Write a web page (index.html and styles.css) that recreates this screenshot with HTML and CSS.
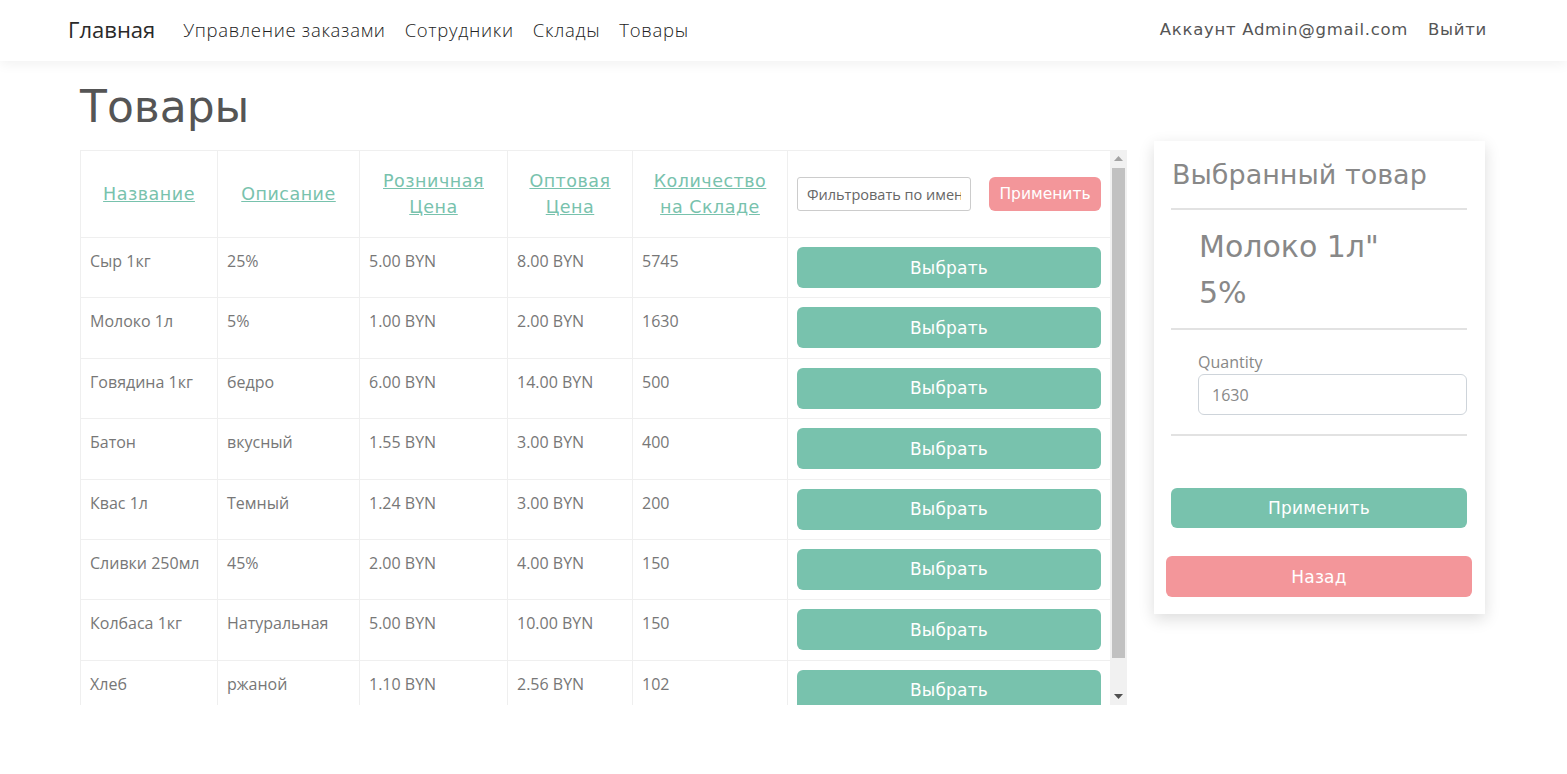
FILE: index.html
```html
<!DOCTYPE html>
<html lang="ru">
<head>
<meta charset="utf-8">
<title>Товары</title>
<link rel="stylesheet" href="styles.css">
</head>
<body>
<nav class="navbar">
  <div class="nav-left">
    <a class="brand" href="#">Главная</a>
    <a class="nav-link" href="#">Управление заказами</a>
    <a class="nav-link" href="#">Сотрудники</a>
    <a class="nav-link" href="#">Склады</a>
    <a class="nav-link" href="#">Товары</a>
  </div>
  <div class="nav-right">
    <a class="nav-link" href="#">Аккаунт Admin@gmail.com</a>
    <a class="nav-link" href="#">Выйти</a>
  </div>
</nav>
<div class="page">
  <div class="left">
    <h1 class="title">Товары</h1>
    <div class="table-frame">
      <div class="scroller">
        <table class="grid">
          <colgroup>
            <col class="c1"><col class="c2"><col class="c3"><col class="c4"><col class="c5"><col class="c6">
          </colgroup>
          <thead>
            <tr>
              <th><a href="#">Название</a></th>
              <th><a href="#">Описание</a></th>
              <th><a href="#">Розничная Цена</a></th>
              <th><a href="#">Оптовая Цена</a></th>
              <th><a href="#">Количество на Складе</a></th>
              <th>
                <div class="filter">
                  <input class="filter-input" type="text" placeholder="Фильтровать по имени">
                  <button class="btn btn-pink btn-sm">Применить</button>
                </div>
              </th>
            </tr>
          </thead>
          <tbody>
            <tr><td>Сыр 1кг</td><td>25%</td><td>5.00 BYN</td><td>8.00 BYN</td><td>5745</td><td><button class="btn btn-teal btn-block">Выбрать</button></td></tr>
            <tr><td>Молоко 1л</td><td>5%</td><td>1.00 BYN</td><td>2.00 BYN</td><td>1630</td><td><button class="btn btn-teal btn-block">Выбрать</button></td></tr>
            <tr><td>Говядина 1кг</td><td>бедро</td><td>6.00 BYN</td><td>14.00 BYN</td><td>500</td><td><button class="btn btn-teal btn-block">Выбрать</button></td></tr>
            <tr><td>Батон</td><td>вкусный</td><td>1.55 BYN</td><td>3.00 BYN</td><td>400</td><td><button class="btn btn-teal btn-block">Выбрать</button></td></tr>
            <tr><td>Квас 1л</td><td>Темный</td><td>1.24 BYN</td><td>3.00 BYN</td><td>200</td><td><button class="btn btn-teal btn-block">Выбрать</button></td></tr>
            <tr><td>Сливки 250мл</td><td>45%</td><td>2.00 BYN</td><td>4.00 BYN</td><td>150</td><td><button class="btn btn-teal btn-block">Выбрать</button></td></tr>
            <tr><td>Колбаса 1кг</td><td>Натуральная</td><td>5.00 BYN</td><td>10.00 BYN</td><td>150</td><td><button class="btn btn-teal btn-block">Выбрать</button></td></tr>
            <tr><td>Хлеб</td><td>ржаной</td><td>1.10 BYN</td><td>2.56 BYN</td><td>102</td><td><button class="btn btn-teal btn-block">Выбрать</button></td></tr>
          </tbody>
        </table>
      </div>
      <div class="vscroll">
        <div class="vs-btn"><svg width="9" height="5" viewBox="0 0 9 5"><path d="M0 5 L4.5 0 L9 5 Z" fill="#a3a3a3"/></svg></div>
        <div class="vs-track"><div class="vs-thumb"></div></div>
        <div class="vs-btn"><svg width="9" height="5" viewBox="0 0 9 5"><path d="M0 0 L9 0 L4.5 5 Z" fill="#505050"/></svg></div>
      </div>
    </div>
  </div>
  <aside class="card">
    <h3 class="card-title">Выбранный товар</h3>
    <hr class="sep">
    <div class="item">
      <div class="item-name">Молоко 1л"</div>
      <div class="item-desc">5%</div>
    </div>
    <hr class="sep">
    <div class="field">
      <label class="field-label">Quantity</label>
      <input class="field-input" type="text" value="1630">
    </div>
    <hr class="sep">
    <button class="btn btn-teal btn-apply">Применить</button>
    <button class="btn btn-pink btn-back">Назад</button>
  </aside>
</div>
</body>
</html>
```

FILE: styles.css
```css
* { box-sizing: border-box; }

body {
  margin: 0;
  font-family: "Open Sans", "Noto Sans", sans-serif;
  color: #808080;
  background: #fff;
}

a { text-decoration: none; }

.navbar {
  height: 61px;
  display: flex;
  align-items: center;
  justify-content: space-between;
  padding: 0 80px 3px 68px;
  background: #fff;
  box-shadow: 0 3px 12px rgba(0, 0, 0, 0.06);
  position: relative;
  z-index: 2;
}

.nav-left, .nav-right {
  display: flex;
  align-items: center;
}

.brand {
  font-size: 22px;
  font-weight: 400;
  color: #2a2a2a;
  margin-right: 28px;
}

.nav-left .nav-link {
  font-size: 18.5px;
  font-weight: 300;
  letter-spacing: 0.7px;
  color: #222;
  margin-right: 19px;
}

.nav-right .nav-link {
  font-family: "DejaVu Sans", "Inter", sans-serif;
  font-size: 16.5px;
  letter-spacing: 0.7px;
  color: #555;
  margin-left: 20px;
}

.page {
  display: flex;
  align-items: flex-start;
  gap: 27px;
  padding: 0 80px;
}

.left {
  width: 1047px;
  flex: none;
}

.title {
  font-family: "DejaVu Sans", "Inter", sans-serif;
  font-weight: 400;
  font-size: 44px;
  line-height: 54px;
  color: #555;
  margin: 19px 0 16px;
}

.table-frame {
  display: flex;
  height: 555px;
}

.scroller {
  width: 1030px;
  height: 555px;
  overflow: hidden;
}

.vscroll {
  width: 17px;
  height: 555px;
  background: #f1f1f1;
  display: flex;
  flex-direction: column;
}

.vs-btn {
  height: 17px;
  flex: none;
  display: flex;
  align-items: center;
  justify-content: center;
}

.vs-track {
  flex: 1;
  padding: 1px 2px 0;
}

.vs-thumb {
  height: 490px;
  background: #c1c1c1;
}

.grid {
  width: 1030px;
  table-layout: fixed;
  border-collapse: collapse;
  margin-bottom: 16px;
}

.c1 { width: 137px; }
.c2 { width: 142px; }
.c3 { width: 148px; }
.c4 { width: 125px; }
.c5 { width: 155px; }
.c6 { width: 323px; }

.grid th, .grid td {
  border: 1px solid #efefef;
  padding: 9px;
}

.grid th {
  height: 87px;
  font-weight: 400;
  text-align: center;
  vertical-align: middle;
}

.grid th a {
  font-family: "DejaVu Sans", "Inter", sans-serif;
  font-size: 17.5px;
  letter-spacing: 0.5px;
  line-height: 26px;
  color: #78c2ad;
  text-decoration: underline;
}

.grid td {
  vertical-align: top;
  font-size: 16px;
  line-height: 28px;
  color: #777;
  padding: 9px 9px 9.4px;
}

.filter {
  display: flex;
  align-items: center;
  justify-content: space-between;
}

.filter-input {
  width: 174px;
  height: 34px;
  border: 1px solid #ccc;
  border-radius: 3px;
  padding: 0 9px;
  font-family: "Open Sans", sans-serif;
  font-size: 14.5px;
  color: #666;
}

.filter-input::placeholder { color: #666; }

.btn {
  border: none;
  border-radius: 6px;
  color: #fff;
  font-family: "DejaVu Sans", "Inter", sans-serif;
  cursor: pointer;
}

.btn-teal { background: #78c2ad; }
.btn-pink { background: #f3969a; }

.btn-sm {
  width: 112px;
  height: 34px;
  font-size: 15.5px;
  padding: 0;
}

.btn-block {
  display: block;
  width: 100%;
  height: 41px;
  font-size: 17px;
  letter-spacing: 0.2px;
}

.card {
  width: 331px;
  flex: none;
  margin-top: 80px;
  background: #fff;
  padding: 15px 18px 17px 17px;
  box-shadow: 0 5px 15px rgba(0, 0, 0, 0.14);
}

.card-title {
  font-family: "DejaVu Sans", "Inter", sans-serif;
  font-weight: 400;
  font-size: 27px;
  line-height: 38px;
  color: #888;
  margin: 0 0 14px 1px;
}

.sep {
  border: none;
  border-top: 2px solid #e2e2e2;
  margin: 0;
}

.item {
  padding: 14px 0 12px 28px;
  font-family: "DejaVu Sans", "Inter", sans-serif;
  font-size: 30px;
  line-height: 46px;
  color: #888;
}

.field {
  padding: 22px 0 19px 27px;
  display: flex;
  flex-direction: column;
}

.field-label {
  font-size: 16px;
  line-height: 20px;
  color: #888;
  margin-bottom: 2px;
}

.field-input {
  height: 41px;
  border: 1px solid #ced4da;
  border-radius: 6px;
  padding: 0 13px;
  font-family: "Open Sans", sans-serif;
  font-size: 16px;
  color: #888;
}

.btn-apply {
  display: block;
  width: 100%;
  height: 40px;
  font-size: 17px;
  letter-spacing: 0.2px;
  margin-top: 52px;
}

.btn-back {
  display: block;
  width: calc(100% + 10px);
  margin: 28px -5px 0;
  height: 41px;
  font-size: 17px;
  letter-spacing: 0.2px;
}
```
